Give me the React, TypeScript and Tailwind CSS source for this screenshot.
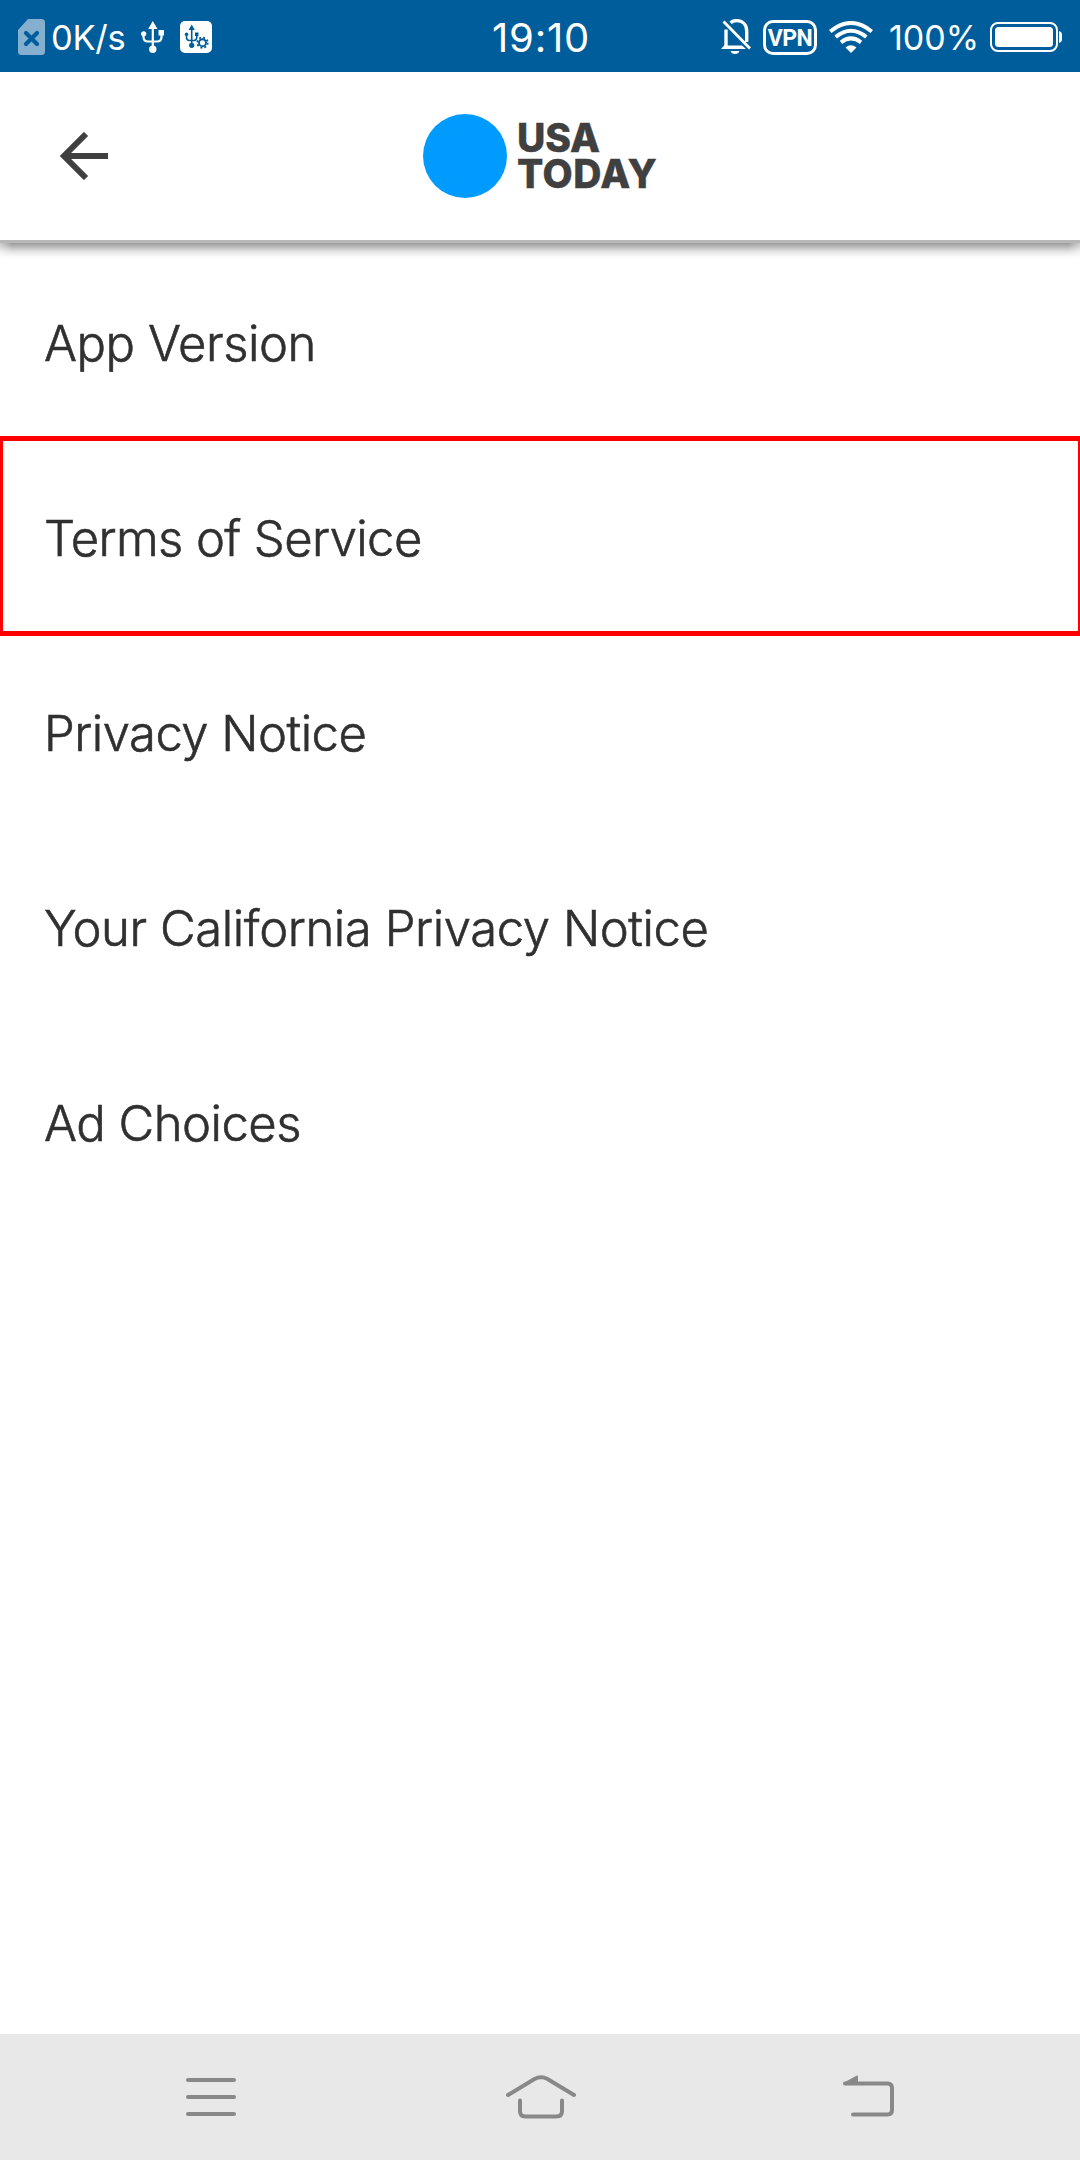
const items = [
  { label: "App Version", tracking: "tracking-[-0.45px]" },
  { label: "Terms of Service", tracking: "tracking-[-0.62px]", selected: true },
  { label: "Privacy Notice", tracking: "tracking-[-0.52px]" },
  { label: "Your California Privacy Notice", tracking: "tracking-[-0.42px]" },
  { label: "Ad Choices", tracking: "tracking-[-0.52px]" },
];

function SimIcon() {
  return (
    <svg className="ml-[18px] shrink-0" width="27" height="36" viewBox="0 0 27 36">
      <path d="M10 0H23.5Q27 0 27 3.500V32.500Q27 36 23.500 36H3.500Q0 36 0 32.500V11Z" fill="#84afcf" />
      <path d="M8 14L19 25M19 14L8 25" stroke="#005d9b" strokeWidth="4.200" strokeLinecap="round" />
    </svg>
  );
}

function UsbIcon() {
  return (
    <svg className="ml-[17px] shrink-0" width="23" height="32" viewBox="0 0 23 32" fill="none">
      <path d="M11.800 6V28M2.500 13.500V16Q2.500 20.500 7 20.500H16Q20.500 20.500 20.500 16V12" stroke="#fff" strokeWidth="2.200" />
      <path d="M11.800 0L16.500 8H7.200Z" fill="#fff" />
      <circle cx="11.800" cy="28.300" r="3.700" fill="#fff" />
      <circle cx="2.700" cy="12.800" r="2.600" fill="#fff" />
      <path d="M17.500 9H23V14.500H17.500Z" fill="#fff" />
    </svg>
  );
}

function UsbSettingsIcon() {
  return (
    <svg className="ml-4 shrink-0" width="32" height="32" viewBox="0 0 32 32" fill="none">
      <rect width="32" height="32" rx="5" fill="#fff" />
      <path d="M11.700 7V24M6.500 13V16Q6.500 19.500 9.500 19.500H14Q16.800 19.500 16.800 16V13" stroke="#005d9b" strokeWidth="1.600" />
      <path d="M11.700 3.500L14.800 9H8.600Z" fill="#005d9b" />
      <circle cx="11.700" cy="24.300" r="2.600" fill="#005d9b" />
      <circle cx="6.500" cy="13.300" r="1.700" fill="#005d9b" />
      <path d="M15 11.500H18.500V15H15Z" fill="#005d9b" />
      <circle cx="22.500" cy="21.500" r="6.300" fill="#fff" />
      <circle cx="22.500" cy="21.700" r="3.500" stroke="#005d9b" strokeWidth="1.900" />
      <circle cx="22.500" cy="21.700" r="5.200" stroke="#005d9b" strokeWidth="1.800" strokeDasharray="2 2.084" />
    </svg>
  );
}

function BellOffIcon() {
  return (
    <svg className="shrink-0" width="30" height="36" viewBox="0 0 30 36" fill="none">
      <path d="M5 28V10.500M9.500 3.800Q12 1.600 15.500 1.600C21.500 1.600 25.700 5.500 25.700 12V23" stroke="#fff" strokeWidth="3.400" />
      <path d="M4 25.500L0 30H25L21 26.500H5Z" fill="#fff" />
      <path d="M9.500 32H18.500Q17.500 35 14 35Q10.500 35 9.500 32Z" fill="#fff" />
      <path d="M2.500 2.500L29 29.500" stroke="#fff" strokeWidth="2.900" />
    </svg>
  );
}

function WifiIcon() {
  return (
    <svg className="ml-3 shrink-0" width="44" height="32" viewBox="0 0 44 32" fill="none">
      <g stroke="#fff" strokeWidth="4">
        <path d="M1.200 10.500Q22 -6.500 42.800 10.500" />
        <path d="M6.700 16Q22 3.500 37.300 16" />
        <path d="M12 21.300Q22 13.500 32 21.300" />
      </g>
      <path d="M16.500 26.500Q22 21.800 27.500 26.500L22 32Z" fill="#fff" />
    </svg>
  );
}

function BatteryIcon() {
  return (
    <svg className="ml-[14px] shrink-0" width="72" height="30" viewBox="0 0 72 30" fill="none">
      <rect x="1" y="1" width="66" height="28" rx="7" stroke="#fff" strokeWidth="2" />
      <rect x="5" y="5" width="58" height="20" rx="3.500" fill="#fff" />
      <path d="M69 9Q72 10 72 12V18Q72 20 69 21Z" fill="#fff" />
    </svg>
  );
}

function StatusBar() {
  return (
    <div className="grid h-[72px] shrink-0 grid-cols-[492px_96px_133px_1fr] bg-[#005d9b] text-white">
      <div className="flex items-center">
        <SimIcon />
        <span className="ml-[6px] w-[73px] pt-[2px] text-[34.500px] leading-[72px] tracking-[-0.3px] whitespace-nowrap">0K/s</span>
        <UsbIcon />
        <UsbSettingsIcon />
      </div>
      <span className="mt-[2px] text-[40px] leading-[72px] tracking-[0.8px] whitespace-nowrap">19:10</span>
      <span />
      <div className="flex items-center">
        <BellOffIcon />
        <span className="ml-3 flex h-[35px] w-[54px] items-center justify-center rounded-[10px] border-[3px] border-white pt-[2px] font-['Roboto'] text-[23px] leading-none font-bold tracking-[-0.5px]">
          VPN
        </span>
        <WifiIcon />
        <span className="ml-[16px] w-[87px] pt-[2px] text-[34px] leading-[72px] whitespace-nowrap">100%</span>
        <BatteryIcon />
      </div>
    </div>
  );
}

function Header() {
  return (
    <header className="grid h-[168px] shrink-0 grid-cols-[423px_1fr] items-center">
      <svg className="ml-[60px]" width="48" height="48" viewBox="0 0 48 48" fill="none">
        <path d="M26 2L4 24L26 46M4 24H48" stroke="#404040" strokeWidth="6" />
      </svg>
      <div className="flex items-center">
        <span className="size-[84px] rounded-full bg-[#009bff]" />
        <p className="ml-[10px] text-[39px] leading-[36px] font-extrabold tracking-[0.5px] text-[#404040] [-webkit-text-stroke:0.4px_#404040]">
          <span className="tracking-[-0.1px]">USA</span>
          <br />
          TODAY
        </p>
      </div>
    </header>
  );
}

function NavBar() {
  return (
    <nav className="flex h-[126px] shrink-0 items-center bg-[#e8e8e8]">
      <svg className="ml-[186px]" width="50" height="38" viewBox="0 0 50 38">
        <path d="M2 2H48M2 19H48M2 36H48" stroke="#888" strokeWidth="4" strokeLinecap="round" />
      </svg>
      <svg className="ml-[270px]" width="70" height="44" viewBox="0 0 70 44" fill="none" stroke="#888" strokeWidth="4" strokeLinecap="round">
        <path d="M2 20L28.500 4Q35 .7 41.500 4L68 20M14 25.500V36Q14 41.500 19.500 41.500H50.500Q56 41.500 56 36V25.500" />
      </svg>
      <svg className="mt-[-2px] ml-[267px]" width="51" height="42" viewBox="0 0 51 42" fill="none">
        <path d="M2 8.500H44.500Q49 8.500 49 13V35Q49 39.500 44.500 39.500H10" stroke="#888" strokeWidth="4" strokeLinecap="round" />
        <path d="M1 7.500L14 .5Q15 .5 15 1.500V8.500H2Z" fill="#888" />
      </svg>
    </nav>
  );
}

export default function App() {
  return (
    <div className="flex h-[2160px] w-[1080px] flex-col overflow-hidden bg-white font-['Inter',sans-serif]">
      <StatusBar />
      <Header />
      <div className="h-[3px] shrink-0 bg-[#b8b8b8]" />
      <div className="-mb-4 h-4 shrink-0 bg-[linear-gradient(#9d9d9d,#bbb_25%,#e4e4e4_55%,#fafafa_85%,#fff)] mask-[linear-gradient(to_right,#0008,#000_12px,#000_1068px,#0008)]" />
      <ul className="flex grow flex-col">
        {items.map(({ label, tracking, selected }) => (
          <li
            key={label}
            className={
              selected
                ? "-mt-[2px] -mb-[3px] flex h-[200px] items-center border-x-[3px] border-y-[5px] border-r-2 border-[#ff0000] pt-[5px] pl-[41px]"
                : "flex h-[195px] items-center pt-[6px] pl-[44px]"
            }
          >
            <span className={`text-[49px] leading-[60px] font-light text-[#303030] [-webkit-text-stroke:0.6px_#303030] ${tracking}`}>
              {label}
            </span>
          </li>
        ))}
      </ul>
      <NavBar />
    </div>
  );
}
